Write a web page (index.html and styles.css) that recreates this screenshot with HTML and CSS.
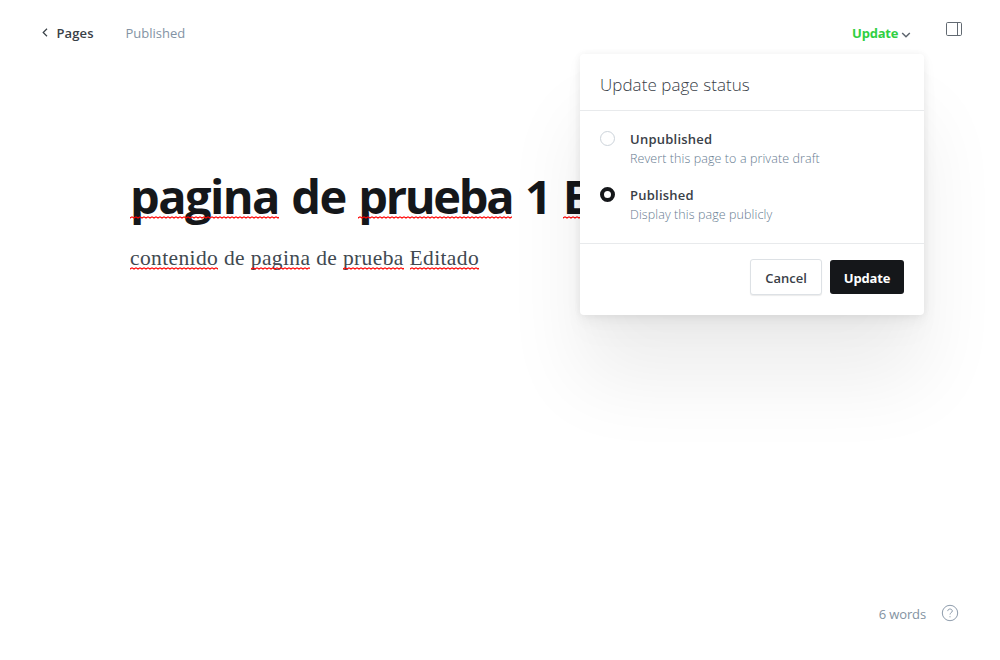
FILE: index.html
```html
<!DOCTYPE html>
<html lang="es">
<head>
<meta charset="utf-8">
<title>Editor</title>
<link rel="stylesheet" href="styles.css">
</head>
<body>
<div class="editor">
  <header class="topbar">
    <a class="back">
      <svg class="back-icon" width="6" height="9" viewBox="0 0 6 9"><path d="M5 .8 1.2 4.5 5 8.2"/></svg>
      <span class="back-label">Pages</span>
    </a>
    <span class="state">Published</span>
    <div class="update-trigger">
      <span class="update-label">Update</span>
      <svg class="chevron" width="10" height="6" viewBox="0 0 10 6"><path d="M1.2 1 5 4.7 8.8 1"/></svg>
      <section class="dropdown">
        <h2 class="dropdown-title">Update page status</h2>
        <div class="options">
          <div class="option">
            <span class="radio"></span>
            <div><div class="option-name">Unpublished</div><div class="option-desc">Revert this page to a private draft</div></div>
          </div>
          <div class="option">
            <span class="radio radio-on"></span>
            <div><div class="option-name">Published</div><div class="option-desc">Display this page publicly</div></div>
          </div>
        </div>
        <footer class="actions">
          <button class="btn btn-cancel">Cancel</button>
          <button class="btn btn-update">Update</button>
        </footer>
      </section>
    </div>
    <svg class="sidebar-icon" width="16" height="14" viewBox="0 0 16 14"><rect x=".5" y=".5" width="15" height="13" rx="1.2"/><path d="M11.5 .5v13"/></svg>
  </header>
  <main class="content">
    <h1 class="title"><span class="misspelled">pagina</span> de <span class="misspelled tight">prueba</span> 1 <span class="misspelled">Editado</span></h1>
    <p class="body-text"><span class="misspelled">contenido</span> de <span class="misspelled">pagina</span> de <span class="misspelled">prueba</span> <span class="misspelled">Editado</span></p>
  </main>
  <div class="statusbar">
    <span class="words">6 words</span>
    <svg class="help" width="18" height="18" viewBox="0 0 18 18"><circle cx="9" cy="9" r="7.7"/><path d="M6.8 7.1C6.8 5.7 7.7 5 9 5s2.3.8 2.3 2c0 1.7-2.3 1.6-2.3 3.5"/><path d="M9 12.2v1.1"/></svg>
  </div>
</div>
</body>
</html>
```
FILE: styles.css
```css
* { box-sizing: border-box; }
body { margin: 0; background: #fff; color: #394047; font: 13px/20px "Open Sans", "Noto Sans", sans-serif; overflow: hidden; }
svg { fill: none; display: block; }
.editor { display: flex; flex-direction: column; height: 660px; }
.topbar { display: flex; align-items: flex-start; height: 66px; padding: 23px 38px 0 42px; }
.back { display: flex; gap: 8.5px; }
.back-icon { margin-top: 5px; stroke: #394047; stroke-width: 1.2; }
.back-label { width: 69px; font-weight: 600; letter-spacing: .1px; }
.state { color: #8393a4; }
.update-trigger { display: flex; position: relative; width: 72px; margin-left: auto; margin-right: 22px; }
.update-label { width: 49px; color: #30cf43; font-weight: 700; letter-spacing: -.2px; }
.chevron { margin-top: 9px; stroke: #5d656e; stroke-width: 1.5; }
.sidebar-icon { margin-top: -1px; stroke: #626a72; }
.dropdown {
  position: absolute; z-index: 2; top: 31px; right: 0; width: 344px; height: 261px;
  background: #fff; border-radius: 4px;
  box-shadow: 0 0 7px rgba(0,0,0,.05), 0 5px 14px rgba(0,0,0,.05), 0 20px 28px rgba(0,0,0,.02), 0 66px 80px rgba(0,0,0,.07);
}
.dropdown-title { margin: 0; height: 57px; padding: 19px 20px 0; border-bottom: 1px solid #e8eaec; font-size: 17px; line-height: 24px; font-weight: 340; letter-spacing: .05px; }
.options { display: flex; flex-direction: column; gap: 17px; height: 133px; padding: 19px 20px 0; border-bottom: 1px solid #e8eaec; }
.option { display: flex; gap: 15px; height: 39px; }
.radio { width: 15px; height: 15px; margin-top: 1px; border: 1px solid #ccd3da; border-radius: 50%; }
.radio-on { border: 4px solid #15171a; }
.option-name { font-weight: 600; line-height: 19px; letter-spacing: .24px; }
.option-desc { font-weight: 300; line-height: 20px; font-size: 12.5px; color: #677c91; letter-spacing: .09px; }
.actions { display: flex; justify-content: flex-end; align-items: flex-start; gap: 8px; padding: 16px 20px 0; }
.btn { height: 34px; margin: 0; padding: 2px 0 0; border: 0; border-radius: 3px; font: 600 13px/20px "Open Sans", sans-serif; }
.btn-cancel { width: 72px; height: 36px; margin-top: -1px; border: 1px solid #dde1e5; background: #fff; color: #394047; box-shadow: 0 1px 1px rgba(0,0,0,.08); }
.btn-update { width: 74px; background: #15171a; color: #fff; font-weight: 700; letter-spacing: -.2px; }
.content { flex: 1; padding: 97px 0 0 130px; white-space: nowrap; }
.title { width: 450px; overflow: hidden; margin: 0; color: #15171a; font-size: 47px; line-height: 66px; font-weight: 700; letter-spacing: -1.6px; word-spacing: 2px; }
.tight { letter-spacing: -2.3px; }
.body-text { margin: 13px 0 0; color: #414950; font: 21.5px/32px "Liberation Serif", serif; letter-spacing: .38px; }
.misspelled { position: relative; display: inline-block; }
.misspelled::after {
  content: ""; position: absolute; left: 0; right: 0; bottom: 10px; height: 3px;
  background: url("data:image/svg+xml,%3Csvg xmlns='http://www.w3.org/2000/svg' width='4' height='3'%3E%3Cpath d='M-1 1 0 2 2 .8 4 2 5 1' fill='none' stroke='red' stroke-width='1.1'/%3E%3C/svg%3E");
}
.body-text .misspelled::after { bottom: 4px; }
.statusbar { display: flex; justify-content: flex-end; gap: 15px; height: 56px; padding-right: 41px; color: #8392a1; }
.words { letter-spacing: -.12px; }
.help { stroke: #8e9cac; }
```
